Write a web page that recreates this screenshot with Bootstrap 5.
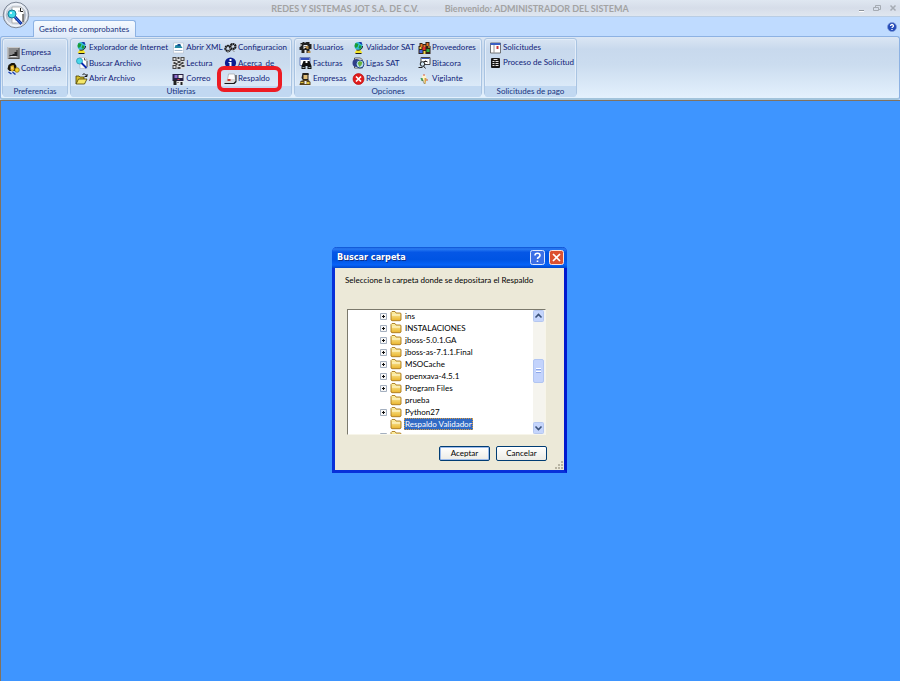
<!DOCTYPE html>
<html lang="es">
<head>
<meta charset="utf-8">
<meta name="viewport" content="width=device-width, initial-scale=1">
<title>Gestion de comprobantes</title>
<link href="https://cdn.jsdelivr.net/npm/bootstrap@5.3.0/dist/css/bootstrap.min.css" rel="stylesheet">
<style>
body{font-family:Lato,"Liberation Sans",sans-serif;font-size:8px;line-height:12px;color:#15428b;background:#bfdbff}
button{font:inherit;color:inherit;background:none;border:0;padding:0}
svg{display:block;flex:none}
.titlebar{height:17px;background:linear-gradient(#dfe7f1,#d6dde9 50%,#dfe6ef);border-bottom:1px solid #b9cde4;color:#a3a3a3;font:bold 9px/18px Lato,sans-serif}
.titlebar .caption{gap:26px}
.winctl{gap:4px;right:1px;top:2px}
.orb{left:2px;top:1px;z-index:3}
.tabs{height:19px;padding:3px 3px 0 33px}
.ribtab{height:17px;padding:0 6px 0 5px;background:linear-gradient(#f5faff,#dfeafa);border:1px solid #8db2e3;border-bottom:0;border-radius:3px 3px 0 0;color:#15307c;margin-bottom:-1px;z-index:2}
.ribbon{height:64px;padding:1px 1px 2px;gap:2px;background:linear-gradient(#dbe6f4,#c8d9ed 20%,#cbdcef 45%,#e4f1fd);border:1px solid #8db2e3;border-bottom:2px solid #a2c4dc;border-radius:3px}
.rgroup{border:1px solid #a9c4e2;border-radius:3px;box-shadow:inset 0 0 0 1px #e3edf9}
.rbody{padding:1px 4px 0}
.rfoot{height:11px;line-height:11px;background:#c1d8f1;color:#15307c;border-radius:0 0 2px 2px}
.rcol{display:grid;grid-auto-rows:15px;align-content:space-between;justify-items:start;height:46px}
.rcol.mid{align-content:start;row-gap:1px;padding-top:5px}
.tool{display:flex;align-items:center;gap:1px;color:#101c78!important;white-space:nowrap;line-height:15px}
.marked::after{content:"";position:absolute;left:-7px;right:-12px;top:-5px;bottom:-6px;border:4px solid #ed1c24;border-radius:7px}
.g1{width:66px}.g2{width:222px}.g3{width:188px}.g4{width:93px}
.c98{width:98px}.c52{width:52px}.c53{width:53px}.c66{width:66px}
.space{background:#3e95ff;border:1px solid #82725f;border-width:1px 0 0 1px;padding-top:146px;padding-right:2px}
.dlg{width:235px;background:#ece9d8;border:3px solid #0831d9;border-top:0;border-color:#0831d9 #0019cf #0831d9 #0831d9;border-radius:5px 5px 0 0;color:#000}
.dlghead{height:21px;margin:0 -3px;padding:0 3px 0 5px;border-radius:5px 5px 0 0;background:linear-gradient(#0a50d0,#2b7cf3 9%,#0557e6 25%,#0054e3 60%,#0663f8 85%,#0047cc);color:#fff;font:bold 9px/21px "DejaVu Sans Condensed","DejaVu Sans",sans-serif;text-shadow:1px 1px #0b2f8c}
.dlghead button{width:15px;height:15px}
.dlgbody{padding:6px 17px 9px 10px}
.tree{height:126px;margin:23px 1px 11px 2px;background:#fff;border:1px solid #7b796c;border-color:#7b796c #f7f5ea #f7f5ea #7b796c}
.node{height:12px;display:grid;grid-template-columns:10px 14px auto;justify-content:start;align-items:center;padding-left:32px;white-space:nowrap}
.node .lbl{padding:0 1px;line-height:12px}
.node .sel{background:#316ac5;color:#fff;outline:1px dotted #d89a3c;outline-offset:-1px}
.sbar{width:12px;background:#f5f4ee;padding-right:1px}
.thumb{height:24px;margin-top:37px;border:1px solid #b1c5f2;border-radius:2px;background:#c3d3fc}
.actions{gap:6px}
.xpbtn{width:51px;height:15px;line-height:13px;border:1px solid #003c74;border-radius:2px;background:linear-gradient(#fff,#ecebe5)}
.xpbtn.def{box-shadow:inset 0 0 0 1px #9dbbeb}
.grip{right:0;bottom:0}
</style>
</head>
<body class="min-vh-100 d-flex flex-column position-relative">
<svg width="0" height="0" class="position-absolute" aria-hidden="true">
<defs>
<linearGradient id="fg" x1="0" y1="0" x2="0" y2="1"><stop offset="0" stop-color="#fff6b0"/><stop offset="1" stop-color="#e9b32c"/></linearGradient>
<linearGradient id="og" x1="0" y1="0" x2="0" y2="1"><stop offset="0" stop-color="#eef2f8"/><stop offset=".5" stop-color="#b2bccd"/><stop offset="1" stop-color="#e9eef5"/></linearGradient>
<symbol id="i-emp" viewBox="0 0 12 12"><path fill="#8b8b8b" d="M0 0h12v12H0z"/><path fill="#c9c9c9" d="M0 0h12v1H1v11H0z"/><path fill="#505050" d="M11 1h1v11H1v-1h10z"/><path fill="#222" d="M2 8h3V7h2V5h2V3h1v6H2z"/><path fill="#ddd" d="M3 9h6v1H3z"/></symbol>
<symbol id="i-key" viewBox="0 0 12 12"><path fill="#1b1608" d="M1 2l3-2h3l2 3-1 5H2L0 6z"/><path fill="#e8b72e" d="M3 3l3-1 1 4-2 3-2-2z"/><path fill="#fff0a0" d="M4 4h1v2H4z"/><circle cx="9.500" cy="7" r="2.300" fill="#f2d228" stroke="#806000" stroke-width=".7"/><path stroke="#1d3fb2" stroke-width="1.500" d="M1 9l3 2M5 9l3 2.500"/></symbol>
<symbol id="i-globe" viewBox="0 0 12 12"><circle cx="6" cy="4" r="4" fill="#35bdd5"/><path fill="#1b9b31" d="M3 1l3 1-1 3-2 1-1-2zM7 3l2 1-1 3-2-1z"/><path fill="#1836aa" d="M6 0h3l1 3-2-1z"/><path fill="#f4e42c" d="M4 8h4l2 3H2z"/><path stroke="#1b1b1b" fill="none" d="M10 4c0 3-3 5-6 4M3 11.500h6"/></symbol>
<symbol id="i-find" viewBox="0 0 12 12"><path fill="#fff" stroke="#a4a9b3" stroke-width=".6" d="M4.500.4h5l2 2v9h-7z"/><path stroke="#222" stroke-width=".7" fill="none" d="M9 1v2h2M11.500 4v6"/><circle cx="4" cy="4" r="3" fill="#49d7ea" stroke="#1d8eaa" stroke-width=".7"/><path stroke="#0a2aad" stroke-width="1.800" d="M6 6l5 5"/></symbol>
<symbol id="i-open" viewBox="0 0 12 12"><path fill="#d4bf2c" stroke="#473d00" stroke-width=".8" d="M.5 11V3h3l1 1h4v2"/><path fill="#f5e76a" stroke="#473d00" stroke-width=".8" d="M.6 11L3 6h8.500L9 11z"/><path stroke="#111" fill="none" d="M7 2c1-2 3-1 4 1M11.500 1v2.500H9"/></symbol>
<symbol id="i-xml" viewBox="0 0 12 12"><path fill="#fff" stroke="#b2bccb" stroke-width=".6" d="M1 1h10v10H1z"/><path fill="#2389a5" d="M3 3h5l2 3H2z"/><path fill="#164f91" d="M5 2h3v2H5z"/><path stroke="#9fb4ca" d="M2 8.500h8"/></symbol>
<symbol id="i-qr" viewBox="0 0 12 12"><path fill="#ddd" d="M0 0h12v12H0z"/><path fill="#444" d="M0 0h4v4H0zM8 0h4v4H8zM0 8h4v4H0zM5 0h2v2H5zM5 4h3v2H5zM1 5h2v2H1zM9 5h2v2H9zM6 7h2v2H6zM9 8h3v2H9zM5 10h3v2H5zM4 3h1v1H4zM3 6h2v2H3zM8 6h1v2H8z"/><path fill="#ddd" d="M1 1h2v2H1zM9 1h2v2H9zM1 9h2v2H1z"/></symbol>
<symbol id="i-mail" viewBox="0 0 12 12"><path fill="#251f42" d="M0 1h11v7H0z"/><path fill="#9270cf" d="M2 2h3v3H2z"/><path fill="#ececec" d="M6 2h4v3H6zM3 8h8v3H3z"/><path fill="#222" d="M1 7h3v5H1zM5 9h1v1H5zM8 9h2v3H8z"/><path fill="#cf3b4f" d="M5 6h2v1H5z"/></symbol>
<symbol id="i-gear" viewBox="0 0 12 12"><g fill="none" stroke="#1a1a1a"><circle cx="3.500" cy="6.500" r="2.600" stroke-width="2.200" stroke-dasharray="1.800 .4"/><circle cx="8.500" cy="4.500" r="2.500" stroke-width="2.200" stroke-dasharray="1.800 .4"/><path stroke="#888" d="M3 11l5-8M8 8l2 2"/></g><path fill="#ddd" d="M3 6h1v1H3zM8 4h1v1H8z"/></symbol>
<symbol id="i-info" viewBox="0 0 12 12"><circle cx="6" cy="6" r="5.600" fill="#0b1d92"/><path fill="#fff" d="M5 2h2v2H5zM4 5h3v4h1v1H4V9h1V6H4z"/></symbol>
<symbol id="i-back" viewBox="0 0 12 12"><path fill="#fff" stroke="#999" stroke-width=".6" d="M4 1h6l1 6H3z"/><path fill="#dadada" d="M0 8l3-2h8v4l-2 1H0z"/><path fill="#181818" d="M0 10h9l2-2V2h1v7l-2 2H0z"/><path fill="#c43a32" d="M3 6h3v2H3z"/></symbol>
<symbol id="i-user" viewBox="0 0 12 12"><path fill="#202020" d="M1 1h2V0h2v1l2-1h3v2h2v5h-2v4H2V8H0V5h1z"/><path fill="#eee" d="M4 3h4v4H4zM1 2h1v2H1zM5 8h2v3H5z"/><path fill="#b68c48" d="M6 4h3v3H6zM8 9h3v2H8z"/><path fill="#111" d="M5 4h1v1H5zM5 6h2v1H5z"/></symbol>
<symbol id="i-bino" viewBox="0 0 12 12"><path fill="#fff" stroke="#40569b" stroke-width=".7" d="M.5.500h10v8H.5z"/><path fill="#3450bd" d="M1 1h9v2H1z"/><path fill="#111" d="M4 4h2v2h2V4h2l2 5v3H8V9H6v3H2V9z"/><path fill="#9aa" d="M3 10h2v1H3zM9 10h2v1H9z"/></symbol>
<symbol id="i-emps" viewBox="0 0 12 12"><path fill="#25211a" d="M3 0h6l1 5-2 3H4L2 5z"/><path fill="#e0be78" d="M4 2h4v4H4z"/><path fill="#5a451c" d="M1 8l3-1h5l2 2v3H0z"/><path fill="#d7bc39" d="M1 9h3v1H1zM7 9h3v2H7z"/><path fill="#eee" d="M9 2h2v4H9zM5 8h2v3H5z"/></symbol>
<symbol id="i-liga" viewBox="0 0 12 12"><path fill="#fff" stroke="#222" stroke-width=".7" d="M2 1h6l2 2v8H2z"/><circle cx="4" cy="6" r="4" fill="#323f89"/><circle cx="7.500" cy="7" r="4" fill="#b8dcf0" stroke="#173b7f" stroke-width=".9"/><path fill="#69b13d" d="M5 6l2-2 3 1-1 3-2 2z"/></symbol>
<symbol id="i-rej" viewBox="0 0 12 12"><circle cx="6" cy="6" r="5.500" fill="#e01b1b" stroke="#b60000" stroke-width=".6"/><path stroke="#fff" stroke-width="1.700" d="M3.500 3.500l5 5M8.500 3.500l-5 5"/></symbol>
<symbol id="i-prov" viewBox="0 0 12 12"><path fill="#332318" d="M1 1h3v1h3V0h4v4h1v8H0V4h1z"/><path fill="#e8762a" d="M2 2h2v3H2zM8 1h2v3H8zM5 3h2v2H5z"/><path fill="#e22e2e" d="M4 5h3v3H4z"/><path fill="#2fae3f" d="M8 7h3v3H8z"/><path fill="#3e66e0" d="M1 8h3v3H1z"/><path fill="#f3d444" d="M5 9h2v3H5zM10 4h1v2h-1zM1 5h2v2H1z"/></symbol>
<symbol id="i-bit" viewBox="0 0 12 12"><path fill="#fff" stroke="#333" stroke-width=".9" d="M2.500.5h9v7h-9z"/><path fill="#3355bb" d="M3 1h8v1H3z"/><circle cx="4" cy="7" r="2.300" fill="#cfe5f3" stroke="#222"/><path stroke="#222" d="M5 9l2 2.500M0 10.500h4M5 5l2-1 2 1"/></symbol>
<symbol id="i-vig" viewBox="0 0 12 12"><path fill="#fff4cf" d="M4 2h3l1 4-2 5-3-4z"/><path fill="#d9a642" d="M6 5h2l-1 6H6z"/><path fill="#4a9e55" d="M2 5h2l1 3H3z"/><path fill="#d5563c" d="M5 1h1v2H5zM8 6h1v2H8z"/><path stroke="#555" stroke-width=".6" d="M4 7l2 4"/></symbol>
<symbol id="i-sol" viewBox="0 0 12 12"><path fill="#fff" stroke="#555" stroke-width=".8" d="M1 1h10v10H1z"/><path fill="#3b60c4" d="M1 1h10v2H1z"/><path stroke="#999" d="M4.500 3v8"/><path fill="#cc3636" d="M7 4h2v3H7z"/></symbol>
<symbol id="i-proc" viewBox="0 0 12 12"><rect x="1.500" y="1" width="9" height="10" rx="1" fill="#161616"/><path fill="#e4e4e4" d="M4 2h4v1H4zM3 4h2v1H3zM6 4h3v1H6zM3 6h2v1H3zM6 6h3v1H6zM3 8h2v1H3zM6 8h3v1H6z"/></symbol>
<symbol id="i-fold" viewBox="0 0 12 12"><path fill="url(#fg)" stroke="#a9781d" stroke-width=".9" d="M1 10V2.500L2 1.500h3l1 1.500h4.500L11 4v6l-1 .7H2z"/><path stroke="#fffbe0" d="M2 5h8"/></symbol>
<symbol id="i-plus" viewBox="0 0 7 7"><path fill="#f7f7f7" stroke="#a3afbf" stroke-width="1" d="M.5.500h6v6h-6z"/><path stroke="#111" d="M2 3.500h3M3.500 2v3"/></symbol>
</defs>
</svg>

<header class="titlebar position-relative">
  <div class="caption d-flex justify-content-center"><span>REDES Y SISTEMAS JOT S.A. DE C.V.</span><span>Bienvenido: ADMINISTRADOR DEL SISTEMA</span></div>
  <div class="winctl d-flex position-absolute">
    <button type="button" aria-label="Minimizar"><svg width="12" height="12"><path stroke="#fff" d="M4 9.500h5"/><path stroke="#8f959d" d="M4 8.500h5"/></svg></button>
    <button type="button" aria-label="Restaurar"><svg width="12" height="12"><path fill="none" stroke="#a5abb3" d="M4.500 5V3.500h5v4H8M2.500 5.500h5v3h-5z"/></svg></button>
    <button type="button" aria-label="Cerrar"><svg width="12" height="12"><path stroke="#a5abb3" stroke-width="1.500" d="M3.500 3.500l5 5M8.500 3.500l-5 5"/></svg></button>
  </div>
</header>
<button type="button" class="orb position-absolute" aria-label="Menu principal"><svg width="28" height="28" viewBox="0 0 28 28"><circle cx="14" cy="14" r="12.800" fill="url(#og)" stroke="#7d8797"/><circle cx="14" cy="14" r="11" fill="none" stroke="#f5f8fc"/><path fill="#fff" stroke="#9a9a9a" stroke-width=".7" d="M10 6h9l3 4v12H10z"/><path fill="none" stroke="#1b1b1b" d="M18.500 7v3.500H21M21 13v8"/><path stroke="#aaa" d="M13 19h4M16 10h2"/><circle cx="10" cy="13" r="4" fill="#43d9e9" stroke="#187f98"/><path fill="#d8fbff" d="M8 11h2v2H8z"/><path stroke="#102b9e" stroke-width="3" d="M13 16l6.500 7"/><path stroke="#3f8cf0" d="M13 16l6 6.500"/></svg></button>

<nav class="tabs d-flex justify-content-between align-items-start">
  <button type="button" class="ribtab position-relative">Gestion de comprobantes</button>
  <button type="button" aria-label="Ayuda"><svg width="10" height="13"><circle cx="5" cy="7" r="4.500" fill="#244bb8" stroke="#7e99d8" stroke-width=".7"/><path fill="none" stroke="#fff" stroke-width="1.300" d="M3.500 6c0-2 3-2 3 0C6.500 7 5 7 5 8M5 9v1"/></svg></button>
</nav>

<section class="ribbon d-flex">
  <div class="rgroup g1 d-flex flex-column">
    <div class="rbody flex-grow-1"><div class="rcol mid">
      <button type="button" class="tool"><svg width="13" height="12"><use href="#i-emp"/></svg>Empresa</button>
      <button type="button" class="tool"><svg width="13" height="12"><use href="#i-key"/></svg>Contraseña</button></div></div>
    <div class="rfoot text-center">Preferencias</div>
  </div>
  <div class="rgroup g2 d-flex flex-column">
    <div class="rbody flex-grow-1 d-flex">
      <div class="rcol c98">
        <button type="button" class="tool"><svg width="13" height="12"><use href="#i-globe"/></svg>Explorador de Internet</button>
        <button type="button" class="tool"><svg width="13" height="12"><use href="#i-find"/></svg>Buscar Archivo</button>
        <button type="button" class="tool"><svg width="13" height="12"><use href="#i-open"/></svg>Abrir Archivo</button></div>
      <div class="rcol c52">
        <button type="button" class="tool"><svg width="13" height="12"><use href="#i-xml"/></svg>Abrir XML</button>
        <button type="button" class="tool"><svg width="13" height="12"><use href="#i-qr"/></svg>Lectura</button>
        <button type="button" class="tool"><svg width="13" height="12"><use href="#i-mail"/></svg>Correo</button></div>
      <div class="rcol">
        <button type="button" class="tool"><svg width="13" height="12"><use href="#i-gear"/></svg>Configuracion</button>
        <button type="button" class="tool"><svg width="13" height="12"><use href="#i-info"/></svg>Acerca_de</button>
        <button type="button" class="tool marked position-relative"><svg width="13" height="12"><use href="#i-back"/></svg>Respaldo</button></div>
    </div>
    <div class="rfoot text-center">Utilerias</div>
  </div>
  <div class="rgroup g3 d-flex flex-column">
    <div class="rbody flex-grow-1 d-flex">
      <div class="rcol c53">
        <button type="button" class="tool"><svg width="13" height="12"><use href="#i-user"/></svg>Usuarios</button>
        <button type="button" class="tool"><svg width="13" height="12"><use href="#i-bino"/></svg>Facturas</button>
        <button type="button" class="tool"><svg width="13" height="12"><use href="#i-emps"/></svg>Empresas</button></div>
      <div class="rcol c66">
        <button type="button" class="tool"><svg width="13" height="12"><use href="#i-globe"/></svg>Validador SAT</button>
        <button type="button" class="tool"><svg width="13" height="12"><use href="#i-liga"/></svg>Ligas SAT</button>
        <button type="button" class="tool"><svg width="13" height="12"><use href="#i-rej"/></svg>Rechazados</button></div>
      <div class="rcol">
        <button type="button" class="tool"><svg width="13" height="12"><use href="#i-prov"/></svg>Proveedores</button>
        <button type="button" class="tool"><svg width="13" height="12"><use href="#i-bit"/></svg>Bitacora</button>
        <button type="button" class="tool"><svg width="13" height="12"><use href="#i-vig"/></svg>Vigilante</button></div>
    </div>
    <div class="rfoot text-center">Opciones</div>
  </div>
  <div class="rgroup g4 d-flex flex-column">
    <div class="rbody flex-grow-1"><div class="rcol align-content-start">
      <button type="button" class="tool"><svg width="13" height="12"><use href="#i-sol"/></svg>Solicitudes</button>
      <button type="button" class="tool"><svg width="13" height="12"><use href="#i-proc"/></svg>Proceso de Solicitud</button></div></div>
    <div class="rfoot text-center">Solicitudes de pago</div>
  </div>
</section>

<main class="space flex-grow-1 d-flex justify-content-center align-items-start">
  <div class="dlg position-relative" role="dialog" aria-labelledby="dt">
    <div class="dlghead d-flex align-items-center">
      <span id="dt" class="me-auto">Buscar carpeta</span>
      <button type="button" aria-label="Ayuda"><svg width="15" height="15"><rect x=".5" y=".5" width="14" height="14" rx="2" fill="#3c6fe6" stroke="#dce7ff"/><path fill="none" stroke="#fff" stroke-width="1.600" d="M5 5.500c0-3 5-3 5 0 0 2-2.500 1.500-2.500 3.500M7.500 10.500v1.500"/></svg></button>
      <button type="button" class="ms-1" aria-label="Cerrar"><svg width="15" height="15"><rect x=".5" y=".5" width="14" height="14" rx="2" fill="#dc5130" stroke="#fbe3dc"/><path stroke="#fff" stroke-width="1.700" d="M4 4l7 7M11 4l-7 7"/></svg></button>
    </div>
    <div class="dlgbody">
      <div class="text-nowrap">Seleccione la carpeta donde se depositara el Respaldo</div>
      <div class="tree d-flex">
        <div class="flex-grow-1 overflow-hidden">
          <div class="node"><svg width="7" height="7"><use href="#i-plus"/></svg><svg width="12" height="12"><use href="#i-fold"/></svg><span class="lbl">ins</span></div>
          <div class="node"><svg width="7" height="7"><use href="#i-plus"/></svg><svg width="12" height="12"><use href="#i-fold"/></svg><span class="lbl">INSTALACIONES</span></div>
          <div class="node"><svg width="7" height="7"><use href="#i-plus"/></svg><svg width="12" height="12"><use href="#i-fold"/></svg><span class="lbl">jboss-5.0.1.GA</span></div>
          <div class="node"><svg width="7" height="7"><use href="#i-plus"/></svg><svg width="12" height="12"><use href="#i-fold"/></svg><span class="lbl">jboss-as-7.1.1.Final</span></div>
          <div class="node"><svg width="7" height="7"><use href="#i-plus"/></svg><svg width="12" height="12"><use href="#i-fold"/></svg><span class="lbl">MSOCache</span></div>
          <div class="node"><svg width="7" height="7"><use href="#i-plus"/></svg><svg width="12" height="12"><use href="#i-fold"/></svg><span class="lbl">openxava-4.5.1</span></div>
          <div class="node"><svg width="7" height="7"><use href="#i-plus"/></svg><svg width="12" height="12"><use href="#i-fold"/></svg><span class="lbl">Program Files</span></div>
          <div class="node"><i></i><svg width="12" height="12"><use href="#i-fold"/></svg><span class="lbl">prueba</span></div>
          <div class="node"><svg width="7" height="7"><use href="#i-plus"/></svg><svg width="12" height="12"><use href="#i-fold"/></svg><span class="lbl">Python27</span></div>
          <div class="node"><i></i><svg width="12" height="12"><use href="#i-fold"/></svg><span class="lbl sel">Respaldo Validador</span></div>
          <div class="node"><svg width="7" height="7"><use href="#i-plus"/></svg><svg width="12" height="12"><use href="#i-fold"/></svg></div>
        </div>
        <div class="sbar d-flex flex-column">
          <button type="button" aria-label="Subir"><svg width="11" height="12"><rect x=".5" y=".5" width="10" height="11" rx="1" fill="#c5d5fc" stroke="#b5c7f0"/><path fill="none" stroke="#3c5279" stroke-width="1.600" d="M2.500 7.500l3-3 3 3"/></svg></button>
          <div class="thumb"><svg width="9" height="22"><path stroke="#fff" d="M2 8.500h5M2 11.500h5"/><path stroke="#8ba6ea" d="M2 9.500h5M2 12.500h5"/></svg></div>
          <button type="button" class="mt-auto" aria-label="Bajar"><svg width="11" height="12"><rect x=".5" y=".5" width="10" height="11" rx="1" fill="#c5d5fc" stroke="#b5c7f0"/><path fill="none" stroke="#3c5279" stroke-width="1.600" d="M2.500 4.500l3 3 3-3"/></svg></button>
        </div>
      </div>
      <div class="actions d-flex justify-content-end"><button type="button" class="xpbtn def">Aceptar</button><button type="button" class="xpbtn">Cancelar</button></div>
    </div>
    <svg class="grip position-absolute" width="9" height="9" aria-hidden="true"><path fill="#b8b4a2" d="M6 0h2v2H6zM6 3h2v2H6zM3 3h2v2H3zM6 6h2v2H6zM3 6h2v2H3zM0 6h2v2H0z"/></svg>
  </div>
</main>
<script src="https://cdn.jsdelivr.net/npm/bootstrap@5.3.0/dist/js/bootstrap.bundle.min.js"></script>
</body>
</html>
